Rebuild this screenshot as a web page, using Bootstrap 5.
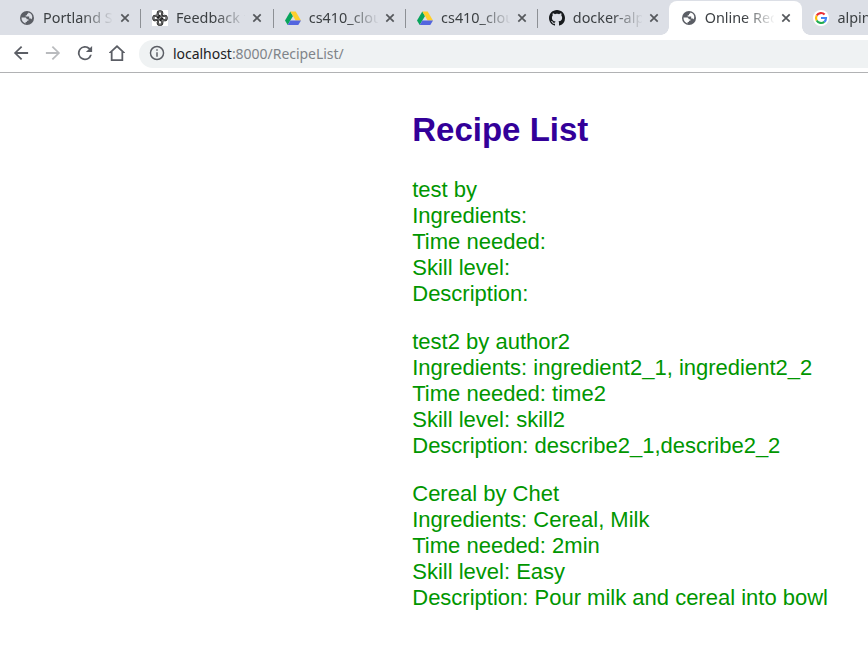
<!DOCTYPE html>
<html lang="en">
<head>
<meta charset="utf-8">
<meta name="viewport" content="width=device-width, initial-scale=1">
<title>Online Recipe List</title>
<link href="https://cdn.jsdelivr.net/npm/bootstrap@5.3.0/dist/css/bootstrap.min.css" rel="stylesheet">
<style>
body { font-family: "Liberation Sans", Arial, sans-serif; background: #fff; height: 666px; overflow: hidden; }
.chrome { font-family: "Noto Sans", sans-serif; color: #3c4043; }
.tabstrip { height: 35px; background: #dcdfe6; padding-left: 8px; }
.tab { flex: 0 0 132.3px; height: 35px; padding: 1px 0 0 11.6px; position: relative; }
.tab:first-child { padding-left: 11px; }
.tab + .tab.sep::before { content: ""; position: absolute; left: 0; top: 9px; width: 1px; height: 19px; background: #8d9095; }
.tab.current { background: #fff; border-radius: 8px 8px 0 0; height: 34px; margin-top: 1px; padding: 0 0 0 11.2px; }
.tab.current::before, .tab.current::after { content: ""; position: absolute; bottom: 0; width: 8px; height: 8px; }
.tab.current::before { left: -8px; background: radial-gradient(circle at 0 0, transparent 7.5px, #fff 8px); }
.tab.current::after { right: -8px; background: radial-gradient(circle at 100% 0, transparent 7.5px, #fff 8px); }
.tab svg { flex: none; }
.tab-drive { padding-left: 12.2px; }
.tab-drive .tab-close { margin-left: 7px; }
.tab-label { width: 69px; margin-left: 8px; font-size: 14.4px; line-height: 20px; -webkit-mask-image: linear-gradient(90deg, #000 56%, transparent 102%); mask-image: linear-gradient(90deg, #000 56%, transparent 102%); }
.tab-close { margin-left: 7.6px; }
.toolbar { height: 38px; border-bottom: 1px solid #b1b2b4; padding: 0 0 1px 13px; }
.tool { width: 16px; height: 16px; margin-right: 16px; fill: #5b5e65; }
.omnibox { height: 28px; background: #eff2f3; border-radius: 14px 0 0 14px; margin-left: -2px; margin-top: 1px; padding-left: 10px; font-size: 14px; color: #7f8489; }
.omnibox svg { margin-top: -2px; }
.omnibox b { font-weight: 400; color: #202124; }
.url { margin-top: -1px; letter-spacing: -.03px; }
.recipes { padding: 37px 0 0 412.25px; color: #009600; font-size: 22px; line-height: 26px; }
.recipes h1 { color: #330099; font-size: 33px; line-height: 40px; font-weight: 700; margin-bottom: 27px; }
.recipes p { margin-bottom: 22px; }
</style>
</head>
<body>
<svg class="d-none" xmlns="http://www.w3.org/2000/svg">
  <symbol id="globe" viewBox="0 0 14 14"><circle cx="7" cy="7" r="7" fill="#5b5e65"/><path fill="currentColor" d="M1.500 6.600h3.300c1.300 0 1.800.6 1.900 1.700h1.700v1.400H6.900v1.300H5.600v1.400C3 11.900 1.300 9.500 1.500 6.600zM8.400 1.600c0 .9-.5 1.300-1.400 1.300v1.300H5.700v1.300h3.500v2h1.300c.6 0 1 .4 1.200 1 1.400-3 .1-5.900-3.300-6.900z"/></symbol>
  <symbol id="drive" viewBox="0 0 16 16"><path fill="#08a45c" d="M5.300 1.500 0 10.500 2.700 15 8 6z"/><path fill="#ffcf2d" d="M5.300 1.500h5.400l5.300 9h-5.400z"/><path fill="#5265df" d="M5.400 10.500H16L13.300 15H2.700z"/></symbol>
  <symbol id="close" viewBox="0 0 10 10"><path d="m1.300 1.300 7.400 7.400m0-7.400L1.300 8.700" stroke="#55585c" stroke-width="1.700" fill="none"/></symbol>
</svg>
<header class="chrome">
  <div class="tabstrip d-flex overflow-hidden">
    <div class="tab d-flex align-items-center"><svg width="16" height="16" color="#dcdfe6"><use href="#globe" x="1" y="1" width="14" height="14"/></svg><span class="tab-label overflow-hidden text-nowrap">Portland State</span><svg class="tab-close" width="10" height="10"><use href="#close"/></svg></div>
    <div class="tab sep d-flex align-items-center"><svg width="16" height="16" viewBox="0 0 16 16"><path fill="#fff" d="M0 0h16v16H0z"/><g fill="none" stroke-linejoin="round"><path id="knot" stroke="#171717" stroke-width="2.100" d="M5.700 8V3.600a2.300 2.300 0 0 1 4.600 0c0 2.400-4.600 6.400-4.600 8.800a2.300 2.300 0 0 0 4.600 0V8M8 5.700H3.600a2.300 2.300 0 0 0 0 4.600c2.400 0 6.400-4.600 8.800-4.600a2.300 2.300 0 0 1 0 4.600H8"/><path stroke="#b9b9b9" stroke-width=".6" d="M5.700 6.500V3.600a2.300 2.300 0 0 1 4.600 0c0 2.400-4.600 6.400-4.600 8.800a2.300 2.300 0 0 0 4.600 0V9.500M6.500 5.700H3.600a2.300 2.300 0 0 0 0 4.600c2.400 0 6.400-4.600 8.800-4.600a2.300 2.300 0 0 1 0 4.600H9.500"/></g></svg><span class="tab-label overflow-hidden text-nowrap">Feedback f</span><svg class="tab-close" width="10" height="10"><use href="#close"/></svg></div>
    <div class="tab tab-drive sep d-flex align-items-center"><svg width="16" height="16"><use href="#drive"/></svg><span class="tab-label overflow-hidden text-nowrap">cs410_cloud</span><svg class="tab-close" width="10" height="10"><use href="#close"/></svg></div>
    <div class="tab tab-drive sep d-flex align-items-center"><svg width="16" height="16"><use href="#drive"/></svg><span class="tab-label overflow-hidden text-nowrap">cs410_cloud</span><svg class="tab-close" width="10" height="10"><use href="#close"/></svg></div>
    <div class="tab sep d-flex align-items-center"><svg width="16" height="16" viewBox="0 0 16 16"><path fill="#171a1d" d="M8 0C3.580 0 0 3.580 0 8c0 3.540 2.290 6.530 5.470 7.590.4.070.55-.17.55-.38 0-.19-.01-.82-.01-1.490-2.010.37-2.530-.49-2.690-.94-.09-.23-.48-.94-.82-1.130-.28-.15-.68-.52-.01-.53.63-.01 1.080.58 1.230.82.72 1.210 1.870.87 2.330.66.07-.52.28-.87.51-1.070-1.780-.2-3.640-.89-3.640-3.950 0-.87.31-1.590.82-2.150-.08-.2-.36-1.020.08-2.120 0 0 .67-.21 2.200.82.64-.18 1.320-.27 2-.27s1.360.09 2 .27c1.530-1.040 2.200-.82 2.200-.82.44 1.100.16 1.920.08 2.120.51.56.82 1.270.82 2.150 0 3.070-1.870 3.750-3.650 3.950.29.25.54.73.54 1.480 0 1.070-.01 1.930-.01 2.200 0 .21.15.46.55.38A8.010 8.010 0 0 0 16 8c0-4.420-3.580-8-8-8z"/></svg><span class="tab-label overflow-hidden text-nowrap">docker-alpine</span><svg class="tab-close" width="10" height="10"><use href="#close"/></svg></div>
    <div class="tab current d-flex align-items-center"><svg width="16" height="16" color="#fff"><use href="#globe" x="1" y="1" width="14" height="14"/></svg><span class="tab-label overflow-hidden text-nowrap">Online Recipe</span><svg class="tab-close" width="10" height="10"><use href="#close"/></svg></div>
    <div class="tab d-flex align-items-center"><svg width="16" height="16" viewBox="0 0 16 16"><circle cx="8" cy="8" r="8" fill="#fff"/><g fill="none" stroke-width="2.200"><path stroke="#ea2f35" d="M3.700 5.500A5 5 0 0 1 11.600 4.500"/><path stroke="#fbbc05" d="M3.700 10.500a5 5 0 0 1 0-5"/><path stroke="#20ad51" d="M11.300 11.800a5 5 0 0 1-7.600-1.300"/><path stroke="#4285f4" d="M8 8h5a5 5 0 0 1-1.700 3.800"/></g></svg><span class="tab-label overflow-hidden text-nowrap">alpine</span></div>
  </div>
  <div class="toolbar d-flex align-items-center">
    <svg class="tool" viewBox="3 3 18 18"><path d="M20 11H7.830l5.590-5.590L12 4l-8 8 8 8 1.410-1.410L7.830 13H20z"/></svg>
    <svg class="tool" viewBox="3 3 18 18"><path fill="#b9bbbe" d="m12 4-1.410 1.410L16.170 11H4v2h12.170l-5.580 5.590L12 20l8-8z"/></svg>
    <svg class="tool" viewBox="3 3 18 18"><path d="M17.650 6.350A8 8 0 1 0 19.730 14h-2.080A6 6 0 1 1 12 6c1.660 0 3.140.690 4.220 1.780L13 11h7V4z"/></svg>
    <svg class="tool" viewBox="3 3 18 18"><path fill-rule="evenodd" d="M12 3 2.500 12H5v9h14v-9h2.500zM7 19v-8.600l5-4.700 5 4.700V19z"/></svg>
    <div class="omnibox d-flex align-items-center flex-grow-1">
      <svg width="16" height="16" viewBox="1 1 22 22"><path fill="#5b5e65" d="M11 7h2v2h-2zm0 4h2v6h-2zm1-9a10 10 0 1 0 0 20 10 10 0 0 0 0-20zm0 18a8 8 0 1 1 0-16 8 8 0 0 1 0 16z"/></svg>
      <span class="url ms-2"><b>localhost</b>:8000/RecipeList/</span>
    </div>
  </div>
</header>
<main class="recipes text-nowrap">
  <h1>Recipe List</h1>
  <p>test by<br>Ingredients:<br>Time needed:<br>Skill level:<br>Description:</p>
  <p>test2 by author2<br>Ingredients: ingredient2_1, ingredient2_2<br>Time needed: time2<br>Skill level: skill2<br>Description: describe2_1,describe2_2</p>
  <p>Cereal by Chet<br>Ingredients: Cereal, Milk<br>Time needed: 2min<br>Skill level: Easy<br>Description: Pour milk and cereal into bowl</p>
</main>
<script src="https://cdn.jsdelivr.net/npm/bootstrap@5.3.0/dist/js/bootstrap.bundle.min.js"></script>
</body>
</html>
